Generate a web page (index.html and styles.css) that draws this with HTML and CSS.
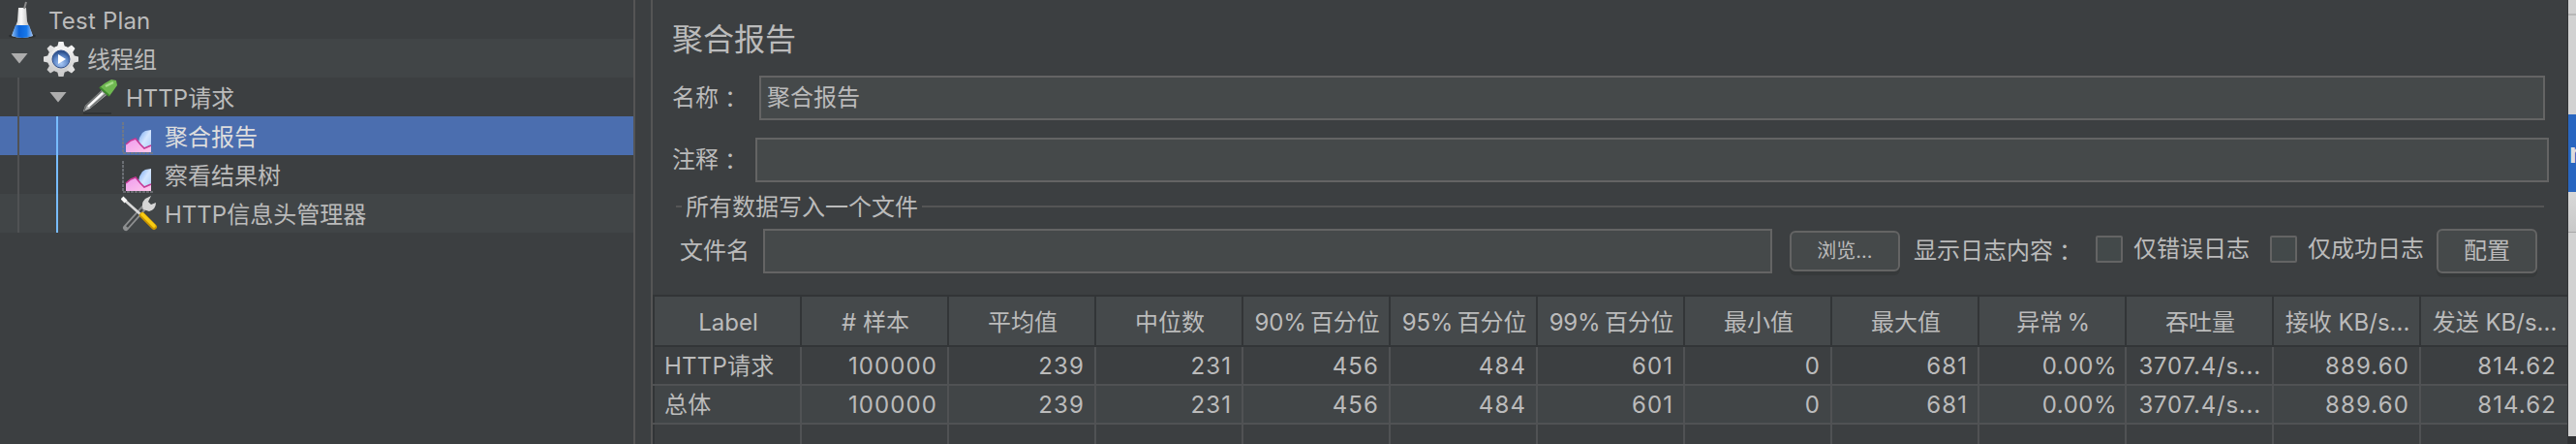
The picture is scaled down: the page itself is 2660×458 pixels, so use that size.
FILE: index.html
```html
<!DOCTYPE html>
<html lang="zh-CN">
<head>
<meta charset="utf-8">
<title>聚合报告</title>
<link rel="stylesheet" href="styles.css">
</head>
<body>
<svg class="defs" width="0" height="0" aria-hidden="true">
  <defs>
    <linearGradient id="pink" x1="0" y1="0" x2="1" y2="1"><stop offset="0" stop-color="#ee9bee"/><stop offset="1" stop-color="#ffc8ec"/></linearGradient>
    <linearGradient id="sky" x1="0" y1="0" x2="1" y2="1"><stop offset="0" stop-color="#6fa4f0"/><stop offset=".5" stop-color="#d5e6ff"/><stop offset="1" stop-color="#a9cdf8"/></linearGradient>
    <linearGradient id="metal" x1="0" y1="0" x2="0" y2="1"><stop offset="0" stop-color="#f6f6f6"/><stop offset="1" stop-color="#c9c9c9"/></linearGradient>
    <linearGradient id="glass" x1="0" y1="0" x2="1" y2="0"><stop offset="0" stop-color="#a9a9a9"/><stop offset=".45" stop-color="#fafafa"/><stop offset="1" stop-color="#a0a0a0"/></linearGradient>
    <linearGradient id="liquid" x1="0" y1="0" x2="1" y2="0"><stop offset="0" stop-color="#8fc0f5"/><stop offset=".35" stop-color="#0b62d8"/><stop offset=".7" stop-color="#1678ea"/><stop offset="1" stop-color="#a4c4f4"/></linearGradient>
    <radialGradient id="orb" cx=".5" cy=".75" r=".7"><stop offset="0" stop-color="#a9c9f5"/><stop offset=".6" stop-color="#5f88c8"/><stop offset="1" stop-color="#274a86"/></radialGradient>
    <symbol id="chart" viewBox="0 0 34 34">
      <path d="M2 1V33H33" fill="none" stroke="#777b80" stroke-width="1.6" stroke-dasharray="3 1"/>
      <path d="M18 22 19 17 22 12 25 10 31 9V28L24 30Z" fill="url(#sky)"/>
      <path d="M5 24 10 20 15 18 20 24 24 28 31 25V32H5Z" fill="url(#pink)"/>
      <path d="M5 24 10 20 15 18 20 24 24 28 31 25" fill="none" stroke="#c53a96" stroke-width="1.6"/>
    </symbol>
  </defs>
</svg>
<div class="app">
  <nav class="tree">
    <div class="node root">
      <svg class="flask" width="28" height="40" viewBox="0 0 28 40"><ellipse cx="14" cy="37" rx="14" ry="2.5" fill="#2c2f31"/><path d="M10 8H18L19 22 25 37Q14 41 3 37L9 22Z" fill="url(#glass)"/><path d="M7 26H21L25 37Q14 41 3 37Z" fill="url(#liquid)"/><path d="M16 9 18 2" stroke="#8b8b8b" stroke-width="2"/></svg>
      <span>Test Plan</span>
    </div>
    <div class="node stripe level1">
      <i class="arrow"></i>
      <svg class="gear" width="38" height="38" viewBox="0 0 38 38"><g fill="url(#metal)"><circle cx="19" cy="19" r="14"/><g id="teeth"><path d="M15 7 16.5 1H21.5L23 7ZM15 31 16.5 37H21.5L23 31ZM7 15 1 16.5V21.5L7 23ZM31 15 37 16.5V21.5L31 23Z"/></g><use href="#teeth" transform="rotate(45 19 19)"/></g><circle cx="19" cy="19" r="9" fill="url(#orb)" stroke="#31508c" stroke-width="1"/><path d="M16 14V24L24 19Z" fill="#fff"/></svg>
      <span>线程组</span>
    </div>
    <div class="node level2">
      <i class="arrow"></i>
      <svg class="dropper" width="40" height="38" viewBox="0 0 40 38"><path d="M3 36H32" stroke="#303335" stroke-width="2"/><path d="M3 34 5 28 22 12 27 17 10 31Z" fill="#b9bbbb"/><path d="M4 33 6 28 22 13M10 30 26 16" fill="none" stroke="#6f7272" stroke-width="1.5"/><path d="M8 29 23 15" stroke="#fff" stroke-width="2"/><path d="M20 9 30 18 33 14 38 7 37 2 32 1 25 5Z" fill="#6fb851"/><path d="M20 9 30 18" stroke="#3f8b2d" stroke-width="2"/><path d="M26 8 34 4" stroke="#a7dd8c" stroke-width="2.5"/></svg>
      <span>HTTP请求</span>
    </div>
    <div class="node leaf selected"><svg class="icon chart" width="34" height="34"><use href="#chart"/></svg><span>聚合报告</span></div>
    <div class="node leaf"><svg class="icon chart" width="34" height="34"><use href="#chart"/></svg><span>察看结果树</span></div>
    <div class="node leaf stripe">
      <svg class="icon" width="38" height="38" viewBox="0 0 38 38"><path d="M5 34 23 14" stroke="#8d8f90" stroke-width="6" stroke-linecap="round"/><path d="M6 33 22 15" stroke="#424547" stroke-width="2.5"/><path d="M23 15Q20 9 25 4L31 1 28 7 31 10 36 8Q36 15 29 17Z" fill="#d6d6d6"/><path d="M2 4 20 20" stroke="#d9d9d9" stroke-width="2.6"/><path d="M1 3 5 7" stroke="#f6f6f6" stroke-width="4"/><path d="M22 21 34 33" stroke="#c99500" stroke-width="6" stroke-linecap="round"/><path d="M22 20 34 32" stroke="#f9cc13" stroke-width="3.5" stroke-linecap="round"/></svg>
      <span>HTTP信息头管理器</span>
    </div>
    <i class="guide outer"></i><i class="guide inner"></i>
  </nav>
  <div class="divider"></div>
  <main class="panel">
    <h1>聚合报告</h1>
    <div class="field name"><label>名称<b lang="zh-Hant">：</b></label><div class="input">聚合报告</div></div>
    <div class="field comment"><label>注释<b lang="zh-Hant">：</b></label><div class="input"></div></div>
    <div class="legend"><span>所有数据写入一个文件</span></div>
    <div class="file">
      <label>文件名</label>
      <div class="input"></div>
      <button class="browse">浏览...</button>
      <span class="log">显示日志内容<b lang="zh-Hant">：</b></span>
      <span class="check errors"><i></i>仅错误日志</span>
      <span class="check success"><i></i>仅成功日志</span>
      <button class="config">配置</button>
    </div>
    <div class="table">
      <div class="row head"><span>Label</span><span># 样本</span><span>平均值</span><span>中位数</span><span class="pct">90% 百分位</span><span class="pct">95% 百分位</span><span class="pct">99% 百分位</span><span>最小值</span><span>最大值</span><span class="pct">异常 %</span><span>吞吐量</span><span>接收 KB/s...</span><span>发送 KB/s...</span></div>
      <div class="row"><span>HTTP请求</span><span>100000</span><span>239</span><span>231</span><span>456</span><span>484</span><span>601</span><span>0</span><span>681</span><span>0.00%</span><span>3707.4/s...</span><span>889.60</span><span>814.62</span></div>
      <div class="row stripe"><span>总体</span><span>100000</span><span>239</span><span>231</span><span>456</span><span>484</span><span>601</span><span>0</span><span>681</span><span>0.00%</span><span>3707.4/s...</span><span>889.60</span><span>814.62</span></div>
      <div class="row rest"><span></span><span></span><span></span><span></span><span></span><span></span><span></span><span></span><span></span><span></span><span></span><span></span><span></span></div>
    </div>
  </main>
  <aside class="behind"><div class="top"></div><div class="page"></div><div class="blue">n</div><div class="bar"></div><div class="sheet"></div><div class="dark"></div></aside>
</div>
</body>
</html>
```

FILE: styles.css
```css
* { box-sizing: border-box; }
body { margin: 0; background: #3c3f41; color: #bbbbbb; font: 24px/40px Inter, "Noto Sans CJK SC", sans-serif; }
.defs { position: absolute; }
i { font-style: normal; }
b { display: inline-block; height: 38px; padding-top: 2px; line-height: 38px; font-family: "Noto Sans CJK TC", sans-serif; font-weight: 400; vertical-align: -2px; line-height: 1; height: auto; padding: 0; }
.app { display: flex; width: 2660px; height: 458px; overflow: hidden; white-space: nowrap; }

.tree { position: relative; width: 654px; flex: none; }
.node { display: flex; height: 40px; align-items: center; }
.node svg { flex: none; }
.node span { padding-top: 3px; }
.stripe { background: #414547; }
.selected { background: #4b6eaf; color: #dddddd; }
.root { padding-left: 9px; gap: 13px; }
.root span { letter-spacing: .2px; }
.level1 { padding-left: 11px; }
.level2 { padding-left: 51px; }
.arrow { width: 18px; height: 11px; background: #adadad; clip-path: polygon(0 0, 100% 0, 50% 100%); }
.gear { margin: 2px 8px 0 15px; }
.dropper { margin: 0 7px 0 14px; }
.leaf { padding-left: 125px; }
.icon { margin-right: 7px; }
.chart { margin: 4px 11px 0 0; }
.guide { position: absolute; width: 2px; bottom: 218px; }
.outer { left: 18px; top: 80px; background: #505254; }
.inner { left: 58px; top: 120px; background: #78bcff; }

.divider { width: 20px; flex: none; border: solid #555555; border-width: 0 2px; }
.panel { width: 1978px; flex: none; display: flex; flex-direction: column; border-right: 1px solid #323537; }
h1 { margin: 17px 0 13px 20px; font-size: 32px; line-height: 48px; font-weight: 400; }
.field { display: flex; height: 46px; align-items: center; padding-left: 20px; }
.input { height: 46px; border: 2px solid #646464; background: #45494a; line-height: 42px; padding-left: 6px; }
.name .input { width: 1844px; }
.name label { width: 90px; }
.comment { margin-top: 18px; }
.comment label { width: 86px; }
.comment .input { width: 1852px; }
.legend { display: flex; align-items: center; gap: 4px; height: 40px; margin: 5px 24px 0 24px; line-height: 38px; }
.legend span { padding-top: 2px; }
.legend::before, .legend::after { content: ""; height: 2px; width: 6px; background: #555555; }
.legend::after { flex: 1; }
.file { display: flex; height: 46px; align-items: center; margin-top: 3px; padding-left: 28px; }
.file label { width: 86px; }
.file .input { width: 1042px; margin-right: 18px; }
button { font: inherit; color: inherit; padding: 0; border: 2px solid #646464; border-radius: 6px; background: #45494a; box-shadow: 0 4px 0 #36393a; }
.browse { width: 114px; height: 42px; font-size: 20px; line-height: 36px; }
.config { width: 104px; height: 46px; line-height: 42px; }
.log { width: 188px; margin-left: 14px; }
.check { display: flex; width: 180px; height: 40px; align-items: center; margin-top: -4px; }
.check i { width: 28px; height: 28px; border: 2px solid #646464; border-radius: 2px; background: #43494a; margin: 0 11px 0 0; }
.success { width: 172px; }

.table { margin-top: 22px; border-top: 2px solid #323537; }
.row { display: grid; grid-template-columns: repeat(13, 152px); height: 40px; border-bottom: 2px solid #505254; line-height: 40px; }
.row span { height: 38px; border-left: 2px solid #505254; padding-right: 10px; text-align: right; letter-spacing: 1.1px; }
.row span:first-child { border-left-color: #323537; padding-left: 10px; text-align: left; letter-spacing: .2px; }
.row span:nth-child(11) { padding-right: 11px; letter-spacing: .8px; }
.row span:nth-child(10) { padding-right: 8px; letter-spacing: .5px; }
.head { height: 52px; line-height: 53px; background: #45494b; border-color: #323537; }
.row.head span { height: 50px; border-color: #323537; text-align: center; padding: 0 0 0 2px; letter-spacing: 0; }
.row.head .pct { word-spacing: -2px; letter-spacing: -.2px; }
.rest, .rest span { height: 20px; border-bottom: 0; }

.behind { width: 8px; flex: none; display: flex; flex-direction: column; background: #d2d2d2; }
.top { height: 16px; border-bottom: 2px solid #b8b8b8; }
.page { height: 102px; }
.blue { height: 80px; background: #2866c0; color: #dddddd; font-size: 28px; font-weight: 700; line-height: 80px; overflow: hidden; padding-left: 1px; }
.bar { height: 42px; background: linear-gradient(#d8d8d8, #c8c8c8); border-bottom: 1px solid #a8a8a8; }
.sheet { height: 210px; }
.dark { height: 8px; background: #303234; }
```
